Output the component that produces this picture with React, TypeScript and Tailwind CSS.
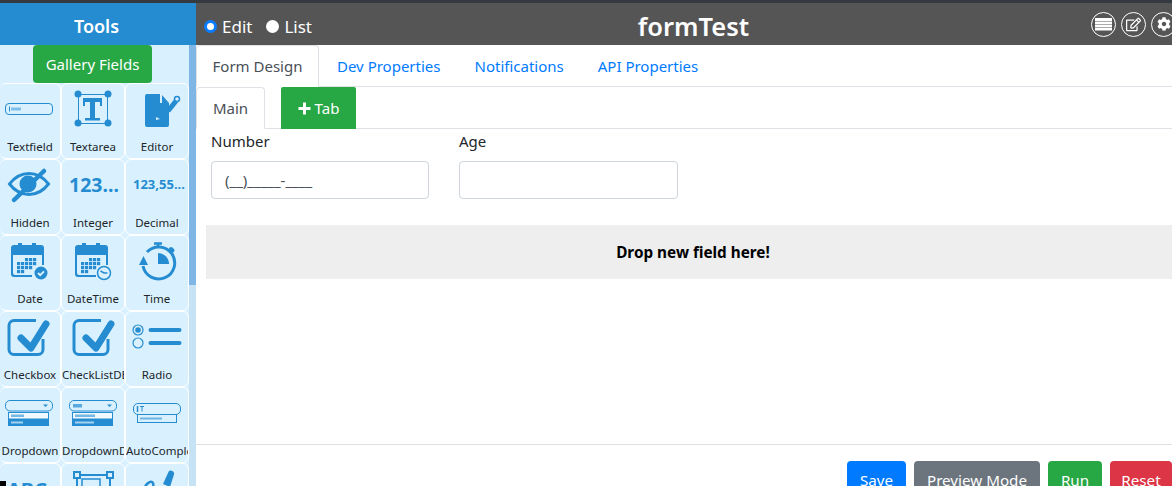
import React from 'react';
import { FaCog, FaRegEdit } from 'react-icons/fa';

const blue = '#258cd1';
const cellBg = '#d9f1ff';

// every tool icon is drawn on a canvas the size of the cell, so coordinates are cell-local
function Canvas({ children }: { children: React.ReactNode }) {
  return (
    <svg width="62" height="53" viewBox="0 0 62 53" fill="none" className="block">
      {children}
    </svg>
  );
}

function TextfieldIcon() {
  return (
    <Canvas>
      <rect x="5.500" y="19.500" width="47" height="11" rx="3.500" stroke={blue} />
      <path d="M9.500 22.500v5" stroke={blue} />
      <rect x="11" y="23.500" width="10" height="3" fill={blue} opacity="0.5" />
    </Canvas>
  );
}

function TextareaIcon() {
  return (
    <Canvas>
      <rect x="16.500" y="10.500" width="29" height="29" stroke={blue} />
      <circle cx="16" cy="10" r="3.500" fill={blue} />
      <circle cx="46" cy="10" r="3.500" fill={blue} />
      <circle cx="16" cy="39" r="3.500" fill={blue} />
      <circle cx="46" cy="39" r="3.500" fill={blue} />
      <path d="M21 14h19v8h-2v-4h-5v16h5v2.500H23V34h5V18h-5v4h-2z" fill={blue} />
    </Canvas>
  );
}

function EditorIcon() {
  return (
    <Canvas>
      <path d="M21 10h13v9h9v22a2 2 0 0 1-2 2H21a2 2 0 0 1-2-2V12a2 2 0 0 1 2-2z" fill={blue} />
      <path d="M36 11l7 8h-7z" fill={blue} />
      <path d="M42 27l8-10" stroke={blue} strokeWidth="5" />
      <circle cx="51" cy="15" r="2.500" fill={cellBg} stroke={blue} strokeWidth="1.500" />
      <path d="M30 33l4 2-4 1z" fill={cellBg} />
    </Canvas>
  );
}

function HiddenIcon() {
  return (
    <Canvas>
      <path d="M9.500 24C16 15.500 23 13.500 29 13.500s13 2 19.500 10.500C42 32.500 35 34.500 29 34.500S16 32.500 9.500 24z" stroke={blue} strokeWidth="3" />
      <circle cx="28" cy="24" r="8.500" fill={blue} />
      <path d="M14 40L44 11" stroke={blue} strokeWidth="4.500" strokeLinecap="round" />
    </Canvas>
  );
}

function CalendarIcon({ kind }: { kind: 'date' | 'time' }) {
  const cells = [
    [25, 22], [29, 22], [33, 22],
    [17, 26], [21, 26], [25, 26], [29, 26], [33, 26],
    [17, 30], [21, 30], [25, 30], [29, 30],
    [17, 34], [21, 34],
  ];
  return (
    <Canvas>
      <g transform={kind === 'time' ? 'translate(2 0)' : undefined}>
        <path d="M14 9h4V7h4v2h10V7h4v2h5a3 3 0 0 1 3 3v17h-2V19H13v18a2 2 0 0 0 2 2h17v2H14a3 3 0 0 1-3-3V12a3 3 0 0 1 3-3z" fill={blue} />
        {cells.map(([x, y]) => (
          <rect key={`${x}-${y}`} x={x} y={y} width="3.200" height="3.200" fill={blue} />
        ))}
      </g>
      {kind === 'date' ? (
        <>
          <circle cx="41" cy="37" r="7" fill={cellBg} />
          <circle cx="41" cy="37" r="6.500" fill={blue} />
          <path d="M38 37l2.200 2.200 3.800-3.800" stroke={cellBg} strokeWidth="2" />
        </>
      ) : (
        <>
          <circle cx="42" cy="37" r="6.500" fill={cellBg} stroke={blue} strokeWidth="1.500" />
          <path d="M38.500 35l3.500 2h3.500" stroke={blue} strokeWidth="1.500" />
        </>
      )}
    </Canvas>
  );
}

function TimeIcon() {
  return (
    <Canvas>
      <path d="M28 7.500h8M32 8v4" stroke={blue} strokeWidth="2.500" />
      <path d="M45 13l1.500 1.500" stroke={blue} strokeWidth="4" strokeLinecap="round" />
      <path d="M21 16A16 16 0 1 1 17 30" stroke={blue} strokeWidth="3" />
      <path d="M17.500 20l-4.500 9h9z" fill={blue} />
      <path d="M32 17a11 11 0 0 1 11 11H32z" fill={blue} />
    </Canvas>
  );
}

function CheckIcon({ dx = 0 }: { dx?: number }) {
  return (
    <Canvas>
      <g transform={`translate(${dx} 0)`}>
        <path d="M36 8.500H14a5 5 0 0 0-5 5v24a5 5 0 0 0 5 5h24a5 5 0 0 0 5-5V27" stroke={blue} strokeWidth="3" />
        <path d="M21 26l10 10 15-24" stroke={blue} strokeWidth="7" strokeLinecap="round" strokeLinejoin="round" />
      </g>
    </Canvas>
  );
}

function RadioIcon() {
  return (
    <Canvas>
      <circle cx="12" cy="18" r="5" stroke={blue} strokeWidth="1.200" />
      <circle cx="12" cy="18" r="2.800" fill={blue} />
      <circle cx="12" cy="31" r="5" stroke={blue} strokeWidth="1.200" />
      <path d="M24.500 18h29M24.500 31h29" stroke={blue} strokeWidth="4" strokeLinecap="round" />
    </Canvas>
  );
}

function DropdownIcon({ db }: { db?: boolean }) {
  const dx = db ? 2 : 0;
  return (
    <Canvas>
      <g transform={`translate(${dx} 0)`}>
        <rect x="5.500" y="12.500" width="47" height="10.500" rx="4.500" stroke={blue} />
        <path d="M43 16.500h5l-2.500 2.500z" fill={blue} />
        {db && <rect x="9" y="16" width="9" height="3.500" fill={blue} opacity="0.7" />}
        <rect x="8.500" y="24.500" width="40" height="6.500" fill="#fff" fillOpacity="0.6" stroke={blue} />
        <rect x="11" y="26.500" width={db ? 20 : 13} height="2.500" fill={blue} opacity="0.6" />
        <rect x="8" y="31" width="41" height="7" fill={blue} />
        <rect x="11" y="33.500" width={db ? 19 : 12} height="2" fill={cellBg} opacity="0.7" />
      </g>
    </Canvas>
  );
}

function AutoCompleteIcon() {
  return (
    <Canvas>
      <rect x="7.500" y="15.500" width="47" height="11" rx="4.500" stroke={blue} />
      <path d="M11.500 18v6" stroke={blue} strokeWidth="1.500" />
      <path d="M14 18.500h4M16 18.500v5" stroke={blue} />
      <rect x="11.500" y="26.500" width="39" height="8" stroke={blue} />
      <rect x="14" y="29.500" width="22" height="2" fill={blue} opacity="0.6" />
    </Canvas>
  );
}

function NumberIcon({ text, x, y, size }: { text: string; x: number; y: number; size: number }) {
  return (
    <Canvas>
      <text x={x} y={y} fontSize={size} fontWeight="700" fill={blue}>
        {text}
      </text>
    </Canvas>
  );
}

function LabelIcon() {
  return (
    <Canvas>
      <rect x="0" y="17" width="6" height="8" fill="#000" />
      <text x="7" y="33" fontSize="20" fontWeight="700" fill={blue}>ABC</text>
    </Canvas>
  );
}

function FrameIcon() {
  return (
    <Canvas>
      <path d="M15 11h33M15 11v30M48 11v30" stroke={blue} strokeWidth="2" />
      <rect x="12" y="8" width="6" height="6" fill={cellBg} stroke={blue} strokeWidth="2" />
      <rect x="45" y="8" width="6" height="6" fill={cellBg} stroke={blue} strokeWidth="2" />
      <rect x="20" y="15" width="18" height="16" stroke={blue} strokeWidth="1.500" />
    </Canvas>
  );
}

function SignIcon() {
  return (
    <Canvas>
      <path d="M16 32c2-12 9-17 11-13 2 5-4 12 1 14" stroke={blue} strokeWidth="2.500" />
      <path d="M37 20l5-11a3 3 0 0 1 6 1.500L44 23z" fill={blue} />
    </Canvas>
  );
}

const tools: { label: string; icon: React.ReactNode }[] = [
  { label: 'Textfield', icon: <TextfieldIcon /> },
  { label: 'Textarea', icon: <TextareaIcon /> },
  { label: 'Editor', icon: <EditorIcon /> },
  { label: 'Hidden', icon: <HiddenIcon /> },
  { label: 'Integer', icon: <NumberIcon text="123..." x={7} y={32} size={19.500} /> },
  { label: 'Decimal', icon: <NumberIcon text="123,55..." x={7} y={29} size={13} /> },
  { label: 'Date', icon: <CalendarIcon kind="date" /> },
  { label: 'DateTime', icon: <CalendarIcon kind="time" /> },
  { label: 'Time', icon: <TimeIcon /> },
  { label: 'Checkbox', icon: <CheckIcon /> },
  { label: 'CheckListDB', icon: <CheckIcon dx={3} /> },
  { label: 'Radio', icon: <RadioIcon /> },
  { label: 'Dropdown', icon: <DropdownIcon /> },
  { label: 'DropdownDB', icon: <DropdownIcon db /> },
  { label: 'AutoComplete', icon: <AutoCompleteIcon /> },
  { label: 'Label', icon: <LabelIcon /> },
  { label: 'Frame', icon: <FrameIcon /> },
  { label: 'Sign', icon: <SignIcon /> },
];

function ToolCell({ label, icon, first }: { label: string; icon: React.ReactNode; first: boolean }) {
  return (
    <div className={first ? 'h-[76px] rounded-[6px] border border-l-0 border-white overflow-hidden' : 'h-[76px] rounded-[6px] border border-white overflow-hidden'}>
      {icon}
      <div className="text-center text-[11.500px] leading-[20px] text-[#212529] whitespace-nowrap overflow-hidden">{label}</div>
    </div>
  );
}

export default function App() {
  return (
    <div className="h-[486px] w-[1172px] overflow-hidden bg-white flex flex-col font-['Noto_Sans',sans-serif] text-[15px] text-[#212529]">
      <div className="h-[3px] bg-[#343a40] shrink-0" />
      <div className="flex flex-1 min-h-0">
        {/* Tools sidebar */}
        <aside className="w-[196px] shrink-0 flex flex-col">
          <div className="h-[42px] bg-[#258cd1] text-white font-semibold text-[18px] pt-[5px] pr-[3px] flex items-center justify-center shrink-0">Tools</div>
          <div className="flex flex-1 min-h-0 bg-[#d9f1ff]">
            <div className="flex-1 min-w-0 flex flex-col overflow-hidden">
              <div className="flex justify-center shrink-0 pr-[4px]">
                <div className="h-[38px] w-[119px] rounded-[4px] bg-[#28a745] text-white text-[15px] pt-[1px] flex items-center justify-center">Gallery Fields</div>
              </div>
              <div className="grid grid-cols-[61px_64px_64px]">
                {tools.map((t, i) => (
                  <ToolCell key={t.label} label={t.label} icon={t.icon} first={i % 3 === 0} />
                ))}
              </div>
            </div>
            <div className="w-[7px] shrink-0 bg-[#c5e3f5]">
              <div className="h-[240px] bg-[#7fb6e6]" />
            </div>
          </div>
        </aside>

        {/* Main area */}
        <main className="flex-1 min-w-0 flex flex-col overflow-hidden">
          <div className="h-[42px] bg-[#555555] text-white flex items-center shrink-0 pl-[8px]">
            <div className="flex items-center gap-[14px] text-[17px] pt-[5px]">
              <label className="flex items-center gap-[5px]">
                <span className="w-[13px] h-[13px] rounded-full bg-white border-[3px] border-[#0a7cff]" />
                Edit
              </label>
              <label className="flex items-center gap-[5px]">
                <span className="w-[13px] h-[13px] rounded-full bg-white" />
                List
              </label>
            </div>
            <div className="flex-1 text-center text-[25.500px] font-semibold pt-[5px] pr-[16px]">formTest</div>
            <div className="flex items-center gap-[5px] w-[81px] shrink-0 overflow-hidden">
              <span className="w-[25px] h-[25px] rounded-full border border-white flex items-center justify-center shrink-0">
                <svg width="17" height="13" viewBox="0 0 17 13" fill="#fff">
                  <rect x="0" y="0" width="17" height="3" />
                  <rect x="0" y="3.500" width="17" height="2.500" />
                  <rect x="0" y="6.500" width="17" height="2.500" />
                  <rect x="0" y="9.500" width="17" height="3" />
                </svg>
              </span>
              <span className="w-[25px] h-[25px] rounded-full border border-white flex items-center justify-center shrink-0">
                <FaRegEdit className="w-[15px] h-[15px] text-white" />
              </span>
              <span className="w-[25px] h-[25px] rounded-full border border-white flex items-center justify-center shrink-0">
                <FaCog className="w-[14px] h-[14px] text-white" />
              </span>
            </div>
          </div>

          <div className="flex h-[42px] border-b border-[#dee2e6] shrink-0 text-[15px] text-[#007bff]">
            <div className="h-[42px] w-[123px] border border-[#dee2e6] border-b-white rounded-t-[4px] bg-white text-[#495057] flex items-center justify-center pt-[1px]">Form Design</div>
            <div className="ml-[1px] px-[17px] flex items-center pt-[1px]">Dev Properties</div>
            <div className="px-[17px] flex items-center pt-[1px]">Notifications</div>
            <div className="px-[17px] flex items-center pt-[1px]">API Properties</div>
          </div>

          <div className="flex h-[42px] border-b border-[#dee2e6] shrink-0 text-[15px]">
            <div className="h-[42px] w-[69px] border border-[#dee2e6] border-b-white rounded-t-[4px] bg-white text-[#495057] flex items-center justify-center">Main</div>
            <div className="ml-[16px] h-[42px] w-[75px] rounded-t-[2px] bg-[#28a745] text-white flex items-center justify-center gap-[4px]">
              <svg width="13" height="13" viewBox="0 0 13 13" fill="#fff">
                <path d="M5 0.500h3V5h4.500v3H8v4.500H5V8H0.500V5H5z" />
              </svg>
              Tab
            </div>
          </div>

          <div className="flex gap-[30px] pl-[15px] pt-[1px] shrink-0">
            <div className="w-[218px]">
              <div className="h-[22px] text-[15px] leading-[22px]">Number</div>
              <div className="mt-[9px] h-[38px] border border-[#ced4da] rounded-[4px] px-[13px] flex items-center text-[15px] text-[#495057]">(__)_____-____</div>
            </div>
            <div className="w-[219px]">
              <div className="h-[22px] text-[15px] leading-[22px]">Age</div>
              <div className="mt-[9px] h-[38px] border border-[#ced4da] rounded-[4px]" />
            </div>
          </div>

          <div className="mt-[26px] ml-[10px] h-[54px] bg-[#eeeeee] pl-[8px] pt-[1px] flex items-center justify-center font-bold text-[15.300px] text-black shrink-0">Drop new field here!</div>

          <div className="mt-[165px] border-t border-[#dee2e6] shrink-0 flex justify-end gap-[8px] pt-[16px] text-[15.200px] text-white">
            <div className="h-[38px] w-[59px] rounded-[4px] bg-[#007bff] flex items-center justify-center shrink-0">Save</div>
            <div className="h-[38px] w-[126px] rounded-[4px] bg-[#6c757d] flex items-center justify-center shrink-0">Preview Mode</div>
            <div className="h-[38px] w-[54px] rounded-[4px] bg-[#28a745] flex items-center justify-center shrink-0">Run</div>
            <div className="h-[38px] w-[62px] rounded-[4px] bg-[#dc3545] flex items-center justify-center shrink-0">Reset</div>
          </div>
        </main>
      </div>
    </div>
  );
}
